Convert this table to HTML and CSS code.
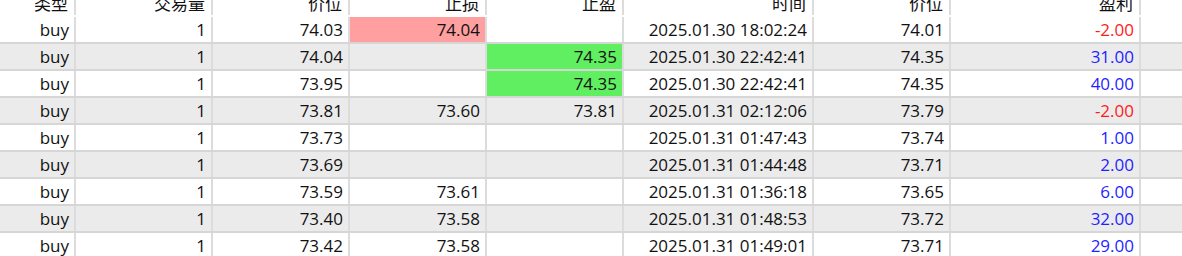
FILE: index.html
```html
<!DOCTYPE html>
<html lang="zh">
<head>
<meta charset="utf-8">
<title>Orders</title>
<link rel="stylesheet" href="styles.css">
</head>
<body>
<div class="grid">
  <div class="row head">
    <div class="c">类型</div><div class="c">交易量</div><div class="c">价位</div><div class="c">止损</div><div class="c">止盈</div><div class="c">时间</div><div class="c">价位</div><div class="c">盈利</div><div class="c end"></div>
  </div>
  <div class="row">
    <div class="c">buy</div><div class="c">1</div><div class="c">74.03</div><div class="c sl">74.04</div><div class="c"></div><div class="c">2025.01.30 18:02:24</div><div class="c">74.01</div><div class="c neg">-2.00</div><div class="c end"></div>
  </div>
  <div class="row alt">
    <div class="c">buy</div><div class="c">1</div><div class="c">74.04</div><div class="c"></div><div class="c tp">74.35</div><div class="c">2025.01.30 22:42:41</div><div class="c">74.35</div><div class="c pos">31.00</div><div class="c end"></div>
  </div>
  <div class="row">
    <div class="c">buy</div><div class="c">1</div><div class="c">73.95</div><div class="c"></div><div class="c tp">74.35</div><div class="c">2025.01.30 22:42:41</div><div class="c">74.35</div><div class="c pos">40.00</div><div class="c end"></div>
  </div>
  <div class="row alt">
    <div class="c">buy</div><div class="c">1</div><div class="c">73.81</div><div class="c">73.60</div><div class="c">73.81</div><div class="c">2025.01.31 02:12:06</div><div class="c">73.79</div><div class="c neg">-2.00</div><div class="c end"></div>
  </div>
  <div class="row">
    <div class="c">buy</div><div class="c">1</div><div class="c">73.73</div><div class="c"></div><div class="c"></div><div class="c">2025.01.31 01:47:43</div><div class="c">73.74</div><div class="c pos">1.00</div><div class="c end"></div>
  </div>
  <div class="row alt">
    <div class="c">buy</div><div class="c">1</div><div class="c">73.69</div><div class="c"></div><div class="c"></div><div class="c">2025.01.31 01:44:48</div><div class="c">73.71</div><div class="c pos">2.00</div><div class="c end"></div>
  </div>
  <div class="row">
    <div class="c">buy</div><div class="c">1</div><div class="c">73.59</div><div class="c">73.61</div><div class="c"></div><div class="c">2025.01.31 01:36:18</div><div class="c">73.65</div><div class="c pos">6.00</div><div class="c end"></div>
  </div>
  <div class="row alt">
    <div class="c">buy</div><div class="c">1</div><div class="c">73.40</div><div class="c">73.58</div><div class="c"></div><div class="c">2025.01.31 01:48:53</div><div class="c">73.72</div><div class="c pos">32.00</div><div class="c end"></div>
  </div>
  <div class="row">
    <div class="c">buy</div><div class="c">1</div><div class="c">73.42</div><div class="c">73.58</div><div class="c"></div><div class="c">2025.01.31 01:49:01</div><div class="c">73.71</div><div class="c pos">29.00</div><div class="c end"></div>
  </div>
</div>
</body>
</html>
```
FILE: styles.css
```css
html, body {
  margin: 0;
  padding: 0;
  background: #ffffff;
  overflow: hidden;
}
.grid {
  margin-top: -10px;
  font-family: "Open Sans", "Noto Sans", "Noto Sans CJK SC", sans-serif;
  font-size: 17px;
  color: #111111;
}
.row {
  display: grid;
  grid-template-columns: 76px 137px 137px 137px 137px 190px 137px 190px 1fr;
  border-bottom: 2px solid #d6d6d6;
  background: #ffffff;
}
.row.alt {
  background: #ebebeb;
}
.row.head {
  border-bottom-color: #ffffff;
}
.c {
  height: 25px;
  line-height: 25px;
  text-align: right;
  padding-right: 5px;
  border-right: 2px solid #dcdcdc;
  white-space: nowrap;
  overflow: hidden;
}
.head .c {
  font-family: "Noto Sans CJK SC", sans-serif;
  padding-right: 6px;
}
.c.end {
  border-right: none;
}
.c.sl {
  background: #ff9f9f;
}
.c.tp {
  background: #60ef60;
}
.c.neg {
  color: #ff1a1a;
}
.c.pos {
  color: #1f1fff;
}
```
